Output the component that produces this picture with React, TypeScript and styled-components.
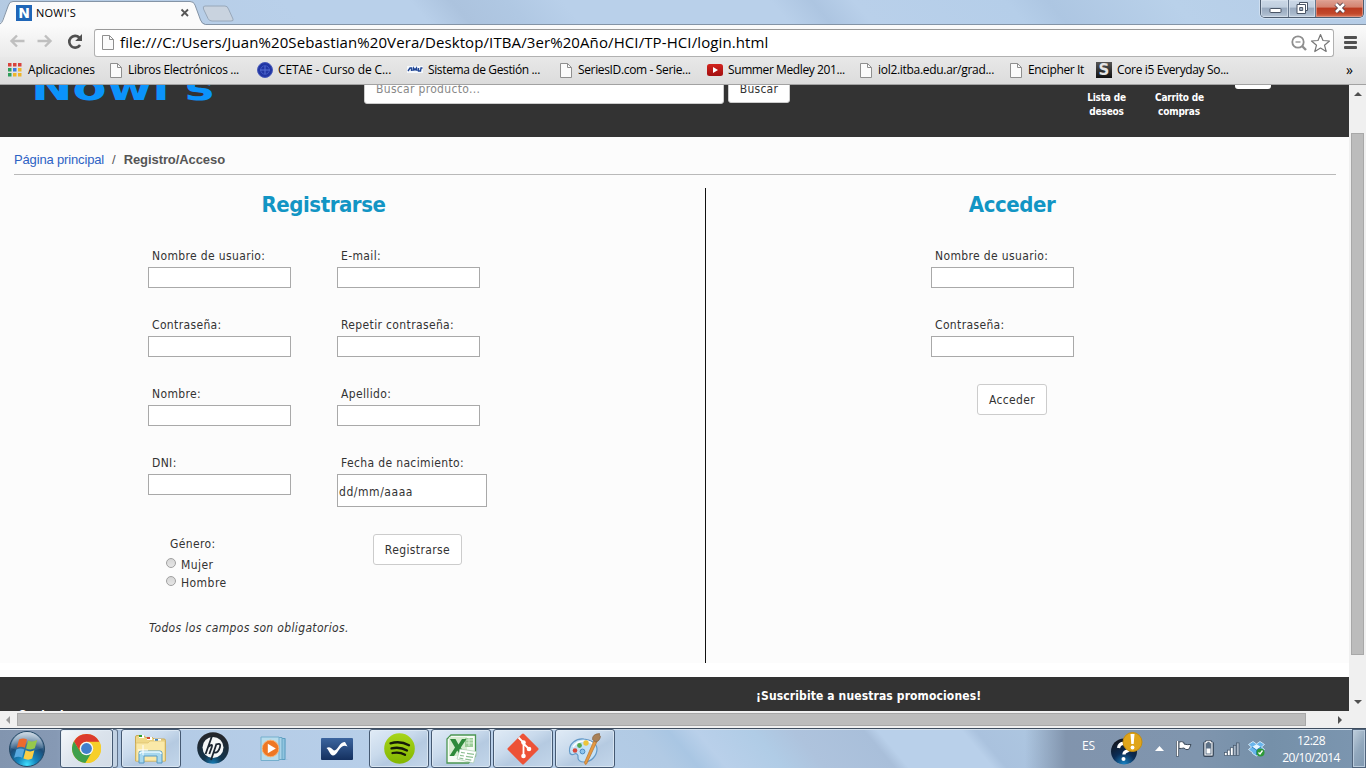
import React from 'react';
import styled, { createGlobalStyle } from 'styled-components';

const ui = `"Open Sans", "Noto Sans", sans-serif`;
const tahoma = `"DejaVu Sans Condensed", "DejaVu Sans", sans-serif`;

const GlobalStyle = createGlobalStyle`
  * { box-sizing: border-box; }
  body { margin: 0; overflow: hidden; background: #fff; }
  svg { display: block; flex: none; }
`;

const Screen = styled.div`
  width: 1366px;
  height: 768px;
  display: flex;
  flex-direction: column;
  overflow: hidden;
  font-family: ${ui};
  color: #000;
`;

const Text = styled.span<{ $ls?: number }>`
  white-space: pre;
  letter-spacing: ${(p) => p.$ls ?? 0}px;
`;

/* ---------- browser frame ---------- */

const TabStrip = styled.div`
  height: 25px;
  flex: none;
  display: flex;
  justify-content: space-between;
  background: linear-gradient(50deg, #b4cae2 0%, #b9d0ea 22%, #b9d0ea 31%, #acc3de 34%, #b0c8e3 38%, #b9d0ea 42%, #b9d0ea 57%, #adc5e1 60%, #b9d0ea 63%, #b5cee9 74%, #adc6e2 77%, #b9d1ea 86%, #b5cce6 100%);
  box-shadow: inset 0 -1px #8494a6;
`;

const TabArea = styled.div`
  width: 240px;
  height: 25px;
  position: relative;
`;

const TabShapes = styled.svg`
  position: absolute;
  inset: 0;
`;

const TabContent = styled.div`
  position: relative;
  display: flex;
  align-items: center;
  height: 25px;
  padding: 1px 0 0 16px;
  font-size: 11px;
`;

const TabTitle = styled(Text)`
  margin: -2px 0 0 4px;
  width: 144px;
`;

const WindowButtons = styled.div`
  display: flex;
  width: 104px;
  height: 18px;
  margin-right: 2px;
  border: 1px solid #4e5d70;
  border-top: 0;
  border-radius: 0 0 5px 5px;
  overflow: hidden;
  box-shadow: 0 0 0 1px #dbe7f4aa;
`;

const WindowButton = styled.div<{ $w: number; $close?: boolean }>`
  width: ${(p) => p.$w}px;
  display: flex;
  justify-content: center;
  border-right: ${(p) => (p.$close ? '0' : '1px solid #66778d')};
  box-shadow: inset 0 0 0 1px ${(p) => (p.$close ? '#e6a293aa' : '#dce6f0aa')};
  background: ${(p) =>
    p.$close
      ? 'linear-gradient(#dca194 0%, #d58472 40%, #bb3b22 50%, #c2482b 80%, #d9765a 100%)'
      : 'linear-gradient(#cbd8e7 0%, #c1cfdf 40%, #9aabc0 50%, #a7b7ca 80%, #bccada 100%)'};
`;

const Toolbar = styled.div`
  height: 32px;
  flex: none;
  display: flex;
  align-items: center;
  padding: 1px 9px 0 9px;
  background: linear-gradient(#fbfbfb, #eaeaea);
`;

const NavIcons = styled.div`
  display: flex;
  gap: 12px;
  width: 85px;
  padding-top: 1px;
`;

const Omnibox = styled.div`
  width: 1240px;
  height: 28px;
  margin-top: 2px;
  display: flex;
  align-items: center;
  padding: 0 2px 0 7px;
  background: #fff;
  border: 1px solid #b1b1b1;
  border-top-color: #999;
  border-radius: 3px;
`;

const Address = styled(Text)`
  flex: 1;
  margin: -2px 0 0 6px;
  font-size: 15px;
  line-height: 20px;
`;

const Menu = styled.div`
  width: 13px;
  margin: 2px 0 0 10px;
  display: flex;
  flex-direction: column;
  gap: 2px;
`;

const MenuBar = styled.i`
  height: 3px;
  border-radius: 1px;
  background: #505050;
`;

const Bookmarks = styled.div`
  height: 28px;
  flex: none;
  display: flex;
  align-items: center;
  padding: 0 13px 1px 8px;
  background: linear-gradient(#e8e8e8, #dcdcdc);
  border-bottom: 1px solid #a2a2a2;
  font-size: 12px;
  line-height: 16px;
`;

const Bookmark = styled.div<{ $w: number }>`
  width: ${(p) => p.$w}px;
  flex: none;
  display: flex;
  align-items: center;
`;

const BookmarkIcon = styled.div<{ $w: number }>`
  width: ${(p) => p.$w}px;
  flex: none;
`;

const Overflow = styled(Text)`
  margin-left: auto;
  font-size: 14px;
  line-height: 14px;
`;

/* ---------- page ---------- */

const Viewport = styled.div`
  height: 626px;
  flex: none;
  display: flex;
`;

const Page = styled.div`
  width: 1349px;
  height: 626px;
  display: flex;
  flex-direction: column;
  overflow: hidden;
  background: #fff;
  font-family: ${tahoma};
  font-size: 12px;
  color: #333;
`;

const Header = styled.header`
  height: 52px;
  flex: none;
  display: flex;
  align-items: flex-start;
  overflow: hidden;
  background: #333;
`;

const Brand = styled.div`
  width: 364px;
  height: 52px;
  padding-left: 31px;
  color: #0b93fb;
  font: bold 36px/30px "DejaVu Sans", sans-serif;
`;

const BrandName = styled.div`
  width: 134px;
  margin-top: -12px;
  transform: scaleX(1.38);
  transform-origin: 0 0;
`;

const SearchBox = styled.div`
  width: 360px;
  height: 34px;
  margin: -15px 4px 0 0;
  padding: 0 11px;
  background: #fff;
  border: 1px solid #ccc;
  border-radius: 3px;
  color: #888;
  line-height: 36px;
`;

const Button = styled.button<{ $w: number; $h: number }>`
  width: ${(p) => p.$w}px;
  height: ${(p) => p.$h}px;
  flex: none;
  padding: 1px 0 0;
  background: #fff;
  border: 1px solid #ccc;
  border-radius: 3px;
  color: #333;
  font: 12px/15px ${tahoma};
`;

const SearchButton = styled(Button)`
  margin-top: -12px;
  line-height: 28px;
`;

const HeaderLinks = styled.div`
  display: flex;
  gap: 28px;
  margin-left: 296px;
  color: #fff;
  font-weight: bold;
  font-size: 10px;
  line-height: 14px;
  text-align: center;
`;

const HeaderLink = styled.div<{ $w: number }>`
  width: ${(p) => p.$w}px;
  padding-top: 6px;
  white-space: pre;
  letter-spacing: -0.2px;
`;

const HeaderChip = styled.div`
  width: 36px;
  height: 14px;
  margin: -10px 0 0 32px;
  background: #fff;
  border-radius: 3px;
`;

const Main = styled.main`
  height: 526px;
  flex: none;
  background: #fcfcfc;
`;

const Breadcrumb = styled.nav`
  height: 38px;
  margin: 0 13px 0 14px;
  padding-top: 14px;
  display: flex;
  border-bottom: 1px solid #b9b9b9;
  font: 13px/17px "Liberation Sans", Arial, sans-serif;
  color: #555;
`;

const Crumb = styled(Text)`
  width: 98px;
  color: #2d62c4;
`;

const CurrentCrumb = styled(Text)`
  margin-left: 8px;
  font-weight: bold;
`;

const Panels = styled.div`
  height: 475px;
  margin-top: 13px;
  display: flex;
`;

const RegisterPanel = styled.section`
  width: 706px;
  padding-left: 148px;
  border-right: 1px solid #111;
`;

const LoginPanel = styled.section`
  padding-left: 225px;
`;

const Title = styled.h2<{ $w: number }>`
  width: ${(p) => p.$w}px;
  height: 59px;
  margin: 0;
  padding-top: 4px;
  color: #1295c4;
  font: bold 22px/26px ${tahoma};
  letter-spacing: -0.45px;
  text-align: center;
`;

const Columns = styled.div`
  display: flex;
  height: 368px;
`;

const Column = styled.div`
  width: 189px;
`;

const Field = styled.label`
  height: 69px;
  display: flex;
  flex-direction: column;
`;

const FieldLabel = styled(Text)`
  height: 20px;
  padding: 0 0 0 4px;
  line-height: 19px;
`;

const Input = styled.div<{ $date?: boolean }>`
  width: ${(p) => (p.$date ? 150 : 143)}px;
  height: ${(p) => (p.$date ? 33 : 21)}px;
  flex: none;
  padding-left: 1px;
  border: 1px solid #a9a9a9;
  background: #fff;
  line-height: 34px;
`;

const Gender = styled.div`
  padding: 12px 0 0 18px;
  line-height: 18px;
`;

const GenderTitle = styled.div`
  padding-left: 4px;
  height: 21px;
`;

const Option = styled.div`
  height: 18px;
  display: flex;
  align-items: center;
  gap: 5px;
`;

const Radio = styled.i`
  width: 10px;
  height: 10px;
  margin-top: -4px;
  border: 1px solid #a0a0a0;
  border-radius: 50%;
  background: linear-gradient(#d6d6d6, #e6e6e6);
`;

const Notice = styled.p`
  margin: 4px 0 0 1px;
  line-height: 18px;
  font-style: italic;
`;

const RegisterAction = styled.div`
  padding: 11px 0 0 36px;
`;

const LoginAction = styled.div`
  margin-top: -1px;
  padding-left: 46px;
`;

const Footer = styled.footer`
  height: 34px;
  margin-top: 14px;
  flex: none;
  display: flex;
  overflow: hidden;
  background: #333;
  color: #fff;
  font-weight: bold;
  line-height: 16px;
`;

const Contact = styled(Text)`
  width: 756px;
  padding: 30px 0 0 18px;
`;

const Subscribe = styled(Text)`
  padding-top: 11px;
`;

/* ---------- scrollbars ---------- */

const VScroll = styled.div`
  width: 17px;
  background: #f0f0f0;
  display: flex;
  flex-direction: column;
  align-items: center;
  padding-top: 7px;
`;

const VThumb = styled.div`
  width: 13px;
  height: 522px;
  margin: 37px 0 45px;
  background: #bcbcbc;
  border: 1px solid #a8a8a8;
`;

const HScroll = styled.div`
  height: 17px;
  flex: none;
  display: flex;
  align-items: center;
  padding-left: 6px;
  background: #f0f0f0;
`;

const HThumb = styled.div`
  width: 1289px;
  height: 13px;
  margin: 0 32px 0 7px;
  background: #bcbcbc;
  border: 1px solid #a8a8a8;
`;

/* ---------- taskbar ---------- */

const Taskbar = styled.div`
  height: 40px;
  flex: none;
  display: flex;
  align-items: center;
  border-top: 1px solid #3e4d5f;
  box-shadow: inset 0 1px #d5e2ef;
  background:
    linear-gradient(90deg, #8295af 0, #8699b4 56px, #8699b400 125px),
    linear-gradient(90deg, #8295af00 1025px, #8194ad 1066px, #7f95ae 1200px, #7590a9 1270px, #7c96b0 1366px),
    linear-gradient(50deg, #b0c8e3 0%, #b9d0ea 35%, #b1cae4 48%, #a9c6e3 50%, #b9d0ea 52%, #b0cce6 56%, #aec3dd 59%, #a9bfda 64%, #b9d0ea 65%, #b9d0ea 71%, #aac2de 72%, #b0cae3 80%);
`;

const Start = styled.div`
  width: 60px;
  padding-left: 8px;
`;

const Task = styled.div<{ $w: number; $gap?: number; $open?: boolean; $active?: boolean }>`
  width: ${(p) => p.$w}px;
  height: 39px;
  flex: none;
  margin-right: ${(p) => p.$gap ?? 0}px;
  display: flex;
  align-items: center;
  justify-content: center;
  border: 1px solid ${(p) => (p.$open ? '#455972' : 'transparent')};
  border-radius: 3px;
  ${(p) =>
    p.$open &&
    `box-shadow: inset 0 0 0 1px #e3edf7b0;
     background: ${
       p.$active
         ? 'linear-gradient(135deg, #f5f8fb 0%, #dbe3ec 50%, #d3dce7 100%)'
         : 'linear-gradient(150deg, #e0ebf6 0%, #c9daec 40%, #b5cae1 60%, #c3d6ea 100%)'
     };`}
`;

const StackEdge = styled.div`
  width: 5px;
  height: 39px;
  margin-right: 3px;
  border: 1px solid #60738b;
  border-left: 0;
  border-radius: 0 3px 3px 0;
  background: #c2d2e3;
`;

const Tray = styled.div`
  margin-left: auto;
  display: flex;
  align-items: center;
  height: 39px;
  color: #fff;
  font-size: 12px;
`;

const TrayItem = styled.div<{ $w: number }>`
  width: ${(p) => p.$w}px;
  flex: none;
`;

const Language = styled(Text)`
  width: 27px;
  margin-top: -6px;
`;

const Clock = styled.div`
  width: 64px;
  margin-right: 9px;
  text-align: center;
  line-height: 17px;
`;

const ShowDesktop = styled.div`
  width: 14px;
  height: 39px;
  border: 1px solid #50647c;
  box-shadow: inset 0 0 0 1px #b9cbdc;
  background: linear-gradient(120deg, #c0cfdc, #92a8bd 50%, #7f98b0);
`;

/* ---------- drawings ---------- */

const PageIcon = () => (
  <svg width="12" height="15" viewBox="0 0 12 15">
    <path d="M.5.5h7l4 4v10H.5z" fill="#fbfbfb" stroke="#8f8f8f" />
    <path d="M7.5.5v4h4" fill="none" stroke="#8f8f8f" />
  </svg>
);

const Arrow = ({ flip }: { flip?: boolean }) => (
  <svg width="16" height="14" viewBox="0 0 16 14">
    <path d="M8 1.5L2.500 7l5.500 5.500M3 7h12.500" transform={flip ? 'matrix(-1 0 0 1 16 0)' : undefined} fill="none" stroke="#bfbfbf" strokeWidth="2.400" />
  </svg>
);

const Reload = () => (
  <svg width="18" height="16" viewBox="0 0 18 16">
    <path d="M12.800 3.500A5.900 5.900 0 1 0 13.600 11" transform="translate(1.500 0)" fill="none" stroke="#505050" strokeWidth="2.600" />
    <path d="M17 0v7h-6.800z" fill="#505050" />
  </svg>
);

const Apps = () => (
  <svg width="14" height="14" viewBox="0 0 14 14">
    {['#d8433c', '#d8433c', '#d8433c', '#2f9e5a', '#3a78e0', '#eeb52a', '#2f9e5a', '#eeb52a', '#eeb52a'].map((c, i) => (
      <rect key={i} x={(i % 3) * 5} y={Math.floor(i / 3) * 5} width="3.500" height="3.500" fill={c} />
    ))}
  </svg>
);

const Cetae = () => (
  <svg width="16" height="16" viewBox="0 0 16 16">
    <circle cx="8" cy="8" r="7.500" fill="#2236a4" stroke="#4a5cba" />
    <circle cx="8" cy="8" r="4.300" fill="none" stroke="#4059c4" />
    <path d="M3 8h10M8 4v8" stroke="#5870d4" />
  </svg>
);

const Amu = () => (
  <svg width="16" height="8" viewBox="0 0 16 8">
    <rect width="16" height="7" fill="#f5f8fc" />
    <path d="M1 5l2-3h1.500v3M6 5l.500-3 1.500 2L9.500 2l.500 3M11.500 2v3h2l.500-3h1.500" fill="none" stroke="#1f4594" strokeWidth="1.400" />
  </svg>
);

const YouTube = () => (
  <svg width="16" height="12" viewBox="0 0 16 12">
    <defs><linearGradient id="yt" x2="0" y2="1"><stop stopColor="#d2231d" /><stop offset="1" stopColor="#a30f10" /></linearGradient></defs>
    <rect width="16" height="12" rx="2.500" fill="url(#yt)" />
    <path d="M6 3l5 3-5 3z" fill="#fff" />
  </svg>
);

const LetterBadge = styled.div<{ $dark?: boolean }>`
  width: 16px;
  height: 16px;
  flex: none;
  overflow: hidden;
  text-align: center;
  color: ${(p) => (p.$dark ? '#e4e4e4' : '#fff')};
  background: ${(p) => (p.$dark ? 'linear-gradient(#555, #111)' : '#1f66b8')};
  font: bold ${(p) => (p.$dark ? '15px/16px' : '14px/16px')} "DejaVu Sans", sans-serif;
`;

const Triangle = ({ d, w, h, c = '#505050' }: { d: string; w: number; h: number; c?: string }) => (
  <svg width={w} height={h} viewBox={`0 0 ${w} ${h}`}><path d={d} fill={c} /></svg>
);

const StartOrb = () => (
  <svg width="38" height="38" viewBox="0 0 38 38">
    <defs>
      <radialGradient id="orb" cx=".5" cy=".95" r=".9">
        <stop stopColor="#3fe0ff" /><stop offset=".3" stopColor="#1585bd" /><stop offset=".65" stopColor="#1d4d78" /><stop offset="1" stopColor="#7f9db9" />
      </radialGradient>
      <linearGradient id="gloss" x2="0" y2="1"><stop stopColor="#fff" stopOpacity=".6" /><stop offset="1" stopColor="#fff" stopOpacity=".05" /></linearGradient>
    </defs>
    <circle cx="19" cy="19" r="17.500" fill="url(#orb)" stroke="#254966" />
    <path d="M3 18a16 16 0 0 1 32 0c-8 3-22 4-32 0z" fill="url(#gloss)" />
    <path d="M11 9.500c3-1.700 6-1.200 8 0l-2.200 8.300c-2.200-1.300-5-1.500-8 0z" fill="#ee6a2d" />
    <path d="M20.200 10.500c3 1.500 6 1 9-.500l-2.400 8.300c-2.800 1.500-5.600 1.500-8.800.200z" fill="#96c84c" />
    <path d="M8.300 19.500c3-1.500 5.800-1.200 8 0l-2.200 8.300c-2.200-1.300-5-1.500-8 0z" fill="#58a9e0" />
    <path d="M17.600 20.300c3 1.500 6 1.500 8.800 0l-2.200 8.300c-2.800 1.500-5.600 1.300-8.800 0z" fill="#fbce45" />
  </svg>
);

const Chrome = () => (
  <svg width="29" height="29" viewBox="0 0 28 28">
    <circle cx="14" cy="14" r="14" fill="#f3c71f" />
    <path d="M1.880 7A14 14 0 0 0 13 28l6-10.500L14 20l-6-3z" fill="#3ea04c" />
    <path d="M14 7.500h12.400A14 14 0 0 1 13 28l6.500-10.500z" fill="#f6cf2b" />
    <path d="M2 7l6 10.300a6.700 6.700 0 0 1 6-9.800h12.400A14 14 0 0 0 2 7z" fill="#dc3b2e" />
    <circle cx="14" cy="14" r="6.500" fill="#f6f6f6" />
    <circle cx="14" cy="14" r="5.200" fill="#4180cc" />
  </svg>
);

const Explorer = () => (
  <svg width="34" height="30" viewBox="0 0 34 30">
    <path d="M1.500 27V3q0-1.500 1.500-1.500h7l1.500 2h7l1.500 1.500h10q1.500 0 1.500 1.500V27z" fill="#efd888" stroke="#caa956" />
    <path d="M5 1h5v3H5zM13 3h5v3h-5zM20 5h7v3h-7z" fill="#fff" />
    <path d="M5 1h3v2H5z" fill="#30a030" /><path d="M13 3h3v2h-3z" fill="#d34a30" /><path d="M21 5h3v2h-3z" fill="#3d88cd" />
    <path d="M2 9h12l2-2h15v20H2z" fill="#fae9a8" stroke="#dcc26d" strokeWidth=".700" />
    <path d="M5 29V19q0-2 2-2h19q2 0 2 2v10h-5v-7H10v7z" fill="#a8d8ee" stroke="#549ac4" />
    <path d="M6 20q0-2 2-2h17q2 0 2 2" fill="none" stroke="#e8faff" strokeWidth="1.500" />
    <path d="M9 11v10M4 16h10" stroke="#fff" />
  </svg>
);

const Hp = () => (
  <svg width="32" height="33" viewBox="0 0 32 33">
    <defs><radialGradient id="hp" cx=".5" cy="1" r=".9"><stop stopColor="#167eb8" /><stop offset=".35" stopColor="#12344c" /><stop offset="1" stopColor="#23262c" /></radialGradient></defs>
    <circle cx="16" cy="16" r="15.800" fill="url(#hp)" />
    <circle cx="16" cy="15.500" r="10.500" fill="#f5f7f8" />
    <path d="M15 4L8.600 22M11 15q5-4 3.800 0L12.300 22M19.600 11.500L14 28M19 12.500q5.300-2 4 2.500-1.800 6.500-6 5.500" fill="none" stroke="#1b2530" strokeWidth="1.800" />
  </svg>
);

const MediaPlayer = () => (
  <svg width="30" height="26" viewBox="0 0 30 26">
    <path d="M9 2h17l-1 22 4-1H8z" fill="#79b4d3" opacity=".45" />
    <path d="M5 2.500h20v21H5z" fill="#8fc4df" stroke="#5b9dc0" />
    <path d="M3 1.500h19v22H3z" fill="#a9d3e8" stroke="#68a6c6" />
    <path d="M1 1h18v23.500H1z" fill="#b8dcec" stroke="#75afcd" />
    <circle cx="10.500" cy="12.500" r="8.300" fill="#ee7724" stroke="#f8b070" />
    <path d="M7.800 7.800l8 4.700-8 4.700z" fill="#fff" />
  </svg>
);

const Swoosh = () => (
  <svg width="32" height="22" viewBox="0 0 32 22">
    <defs><linearGradient id="sw" x2="0" y2="1"><stop stopColor="#3c659f" /><stop offset="1" stopColor="#14305f" /></linearGradient></defs>
    <rect width="32" height="22" rx="1" fill="url(#sw)" />
    <path d="M5.500 10q2.500-1.500 4.500 0l3 2.500q2 0 5-4.500 2.500-4 6-4l2.500 4.500q-5-2.500-9 4-3 5-5.500 5-2 0-4-4-1-2.500-2.500-3.500z" fill="#fff" />
  </svg>
);

const Spotify = () => (
  <svg width="31" height="31" viewBox="0 0 31 31">
    <defs><linearGradient id="sp" x2="0" y2="1"><stop stopColor="#a7d51b" /><stop offset="1" stopColor="#83b600" /></linearGradient></defs>
    <circle cx="15.500" cy="15.500" r="15.300" fill="url(#sp)" />
    <path d="M6.500 10.300q10-2.800 18.500 2M7.500 15.400q8.500-2 15.500 2.100M8.500 20q7-1.500 12.500 1.800" fill="none" stroke="#161a08" strokeWidth="2.300" strokeLinecap="round" />
  </svg>
);

const Excel = () => (
  <svg width="31" height="30" viewBox="0 0 31 30">
    <path d="M5 1h24.500v21l-7 7H1V5z" fill="#f6fbf5" stroke="#4b9651" strokeWidth="1.300" />
    <path d="M3 3h18v19H3z" fill="#d7ecd0" />
    <path d="M19 4h8v9h-8z" fill="#9ccd98" /><path d="M20 6h7M20 9h7M23 4v8" stroke="#d8eed6" />
    <path d="M4 5h5.500l3 5.500L16 5h4.500l-5.700 8.500L20 22h-5.700l-3-5.500L8 22H3.500l5.500-8.500z" fill="#2e8a3a" />
    <path d="M14 15l16.500 2.500-3 11.500L11 25z" fill="#fff" stroke="#a8cdae" strokeWidth=".700" />
    <path d="M15 18.300l4 .700m2 .400l7 1M14 21.300l4 .700m2 .400l7 1M13.300 24l4 .800m2 .300l6 1" stroke="#8fc095" strokeWidth="1.200" />
  </svg>
);

const Git = () => (
  <svg width="34" height="34" viewBox="0 0 34 34">
    <rect x="5.600" y="5.600" width="22.800" height="22.800" rx="1.500" transform="rotate(45 17 17)" fill="#ed5237" />
    <path d="M12.500 5.500l5 5v14M17.500 11.500l5.500 5.500" stroke="#fff" strokeWidth="1.800" fill="none" />
    <g fill="#fff"><circle cx="17.500" cy="10.500" r="2.300" /><circle cx="23" cy="17" r="2.300" /><circle cx="17.500" cy="24" r="2.300" /></g>
  </svg>
);

const Paint = () => (
  <svg width="34" height="32" viewBox="0 0 34 32">
    <path d="M16 6C8 5 1 11 1.500 18c0 4 3 4 5 3s4 1 3.500 3c-.500 3 2 5 6 5 8 0 13-7 13-13S22 6.500 16 6z" fill="#c6e2f6" stroke="#6399c7" strokeWidth="1.200" />
    <path d="M5 14q4-6 11-6 8 0 10 5" stroke="#fff" strokeWidth="1.500" fill="none" />
    <circle cx="7" cy="17.500" r="2.300" fill="#d74a3b" /><circle cx="11.500" cy="12.500" r="2.400" fill="#53a853" />
    <circle cx="18" cy="10" r="2.700" fill="#edc53a" /><circle cx="14.500" cy="18.500" r="2.400" fill="#8cc4ee" stroke="#4c8cc2" />
    <path d="M16.500 29.500l9.500-22 3 1L18.500 31q-1.500 1.500-2-1.500z" fill="#e69a42" stroke="#b8722d" strokeWidth=".700" />
    <path d="M24.500 6.500Q24 1 31.500.500q-.500 2 1 3-1 5-5 5.500z" fill="#a98158" stroke="#7d5a38" strokeWidth=".600" />
  </svg>
);

const HelpAlert = () => (
  <svg width="34" height="34" viewBox="0 0 34 34">
    <defs><radialGradient id="ha" cx=".5" cy="1" r=".9"><stop stopColor="#1886c8" /><stop offset=".5" stopColor="#0b2c55" /><stop offset="1" stopColor="#111723" /></radialGradient></defs>
    <circle cx="15" cy="19.500" r="13" fill="url(#ha)" />
    <path d="M9.500 16q1-5 6-4.500 5.500.500 5 4.500-.500 2.500-3.500 3.500-2 .800-2 3" fill="none" stroke="#fff" strokeWidth="3.300" />
    <circle cx="14.500" cy="27" r="2" fill="#fff" />
    <circle cx="23.500" cy="10" r="9.500" fill="#e0a51b" stroke="#c48d10" />
    <path d="M21.500 2h4l-.800 10h-2.400z" fill="#fff" /><circle cx="23.500" cy="15.500" r="1.900" fill="#fff" />
  </svg>
);

const Flag = () => (
  <svg width="16" height="17" viewBox="0 0 16 17">
    <path d="M1.500 1v15.500" stroke="#3c4a5a" strokeWidth="3" /><path d="M3 2q3-1 5 .500v1.500q3 1 7 .500-1 3-2.500 5-3 .800-4.500-1.500-2 .500-5 .500z" fill="#fff" stroke="#3c4a5a" /><path d="M1.500 1v15" stroke="#fff" strokeWidth="1.500" />
  </svg>
);

const Battery = () => (
  <svg width="11" height="17" viewBox="0 0 11 17">
    <path d="M3.500 1h4v1.500H9q1 0 1 1V15q0 1-1 1H2q-1 0-1-1V3.500q0-1 1-1h1.500z" fill="#5d7187" stroke="#38475a" strokeWidth="1.800" />
    <path d="M3.800 1.200h3.400v1.600H9V15H2V2.800h1.800z" fill="none" stroke="#fff" strokeWidth="1.100" />
    <path d="M3.500 8.500h4v5h-4z" fill="#fff" />
  </svg>
);

const Signal = () => (
  <svg width="16" height="14" viewBox="0 0 16 14">
    {[0, 1, 2, 3, 4].map((i) => (
      <rect key={i} x={0.5 + i * 3} y={10.5 - i * 2.4} width="2.600" height={3 + i * 2.4} fill={i > 2 ? '#a9b7c6' : '#fff'} stroke="#44566a" strokeWidth=".700" />
    ))}
  </svg>
);

const Dropbox = () => (
  <svg width="17" height="16" viewBox="0 0 17 16">
    <path d="M5 .500l3.500 2.500L12 .500l4.500 3-3 2.500 3 2.500-4 3v1l-4 2.500-4-2.500v-1l-4-3L3.500 6l-3-2.500z" fill="#69b5ec" stroke="#e3f3fd" strokeWidth=".800" />
    <path d="M8.500 3.300L13 6l-4.500 3L4 6z" fill="#e4f4ff" /><path d="M4 6l4.500 3v5M13 6L8.500 9" stroke="#2a80c4" fill="none" />
    <circle cx="12.500" cy="11.500" r="4" fill="#2e9a38" /><path d="M10.500 11.500l1.500 1.500 2.500-3.500" stroke="#fff" strokeWidth="1.300" fill="none" />
  </svg>
);

const bookmarks: { label: string; w: number; iw: number; icon: React.ReactNode; ls?: number }[] = [
  { label: 'Aplicaciones', w: 102, iw: 20, icon: <Apps />, ls: -0.2 },
  { label: 'Libros Electrónicos ...', w: 147, iw: 18, icon: <PageIcon />, ls: -0.3 },
  { label: 'CETAE - Curso de C...', w: 150, iw: 21, icon: <Cetae />, ls: -0.1 },
  { label: 'Sistema de Gestión ...', w: 153, iw: 21, icon: <Amu />, ls: -0.37 },
  { label: 'SeriesID.com - Serie...', w: 147, iw: 18, icon: <PageIcon />, ls: -0.35 },
  { label: 'Summer Medley 201...', w: 153, iw: 21, icon: <YouTube />, ls: -0.4 },
  { label: 'iol2.itba.edu.ar/grad...', w: 150, iw: 18, icon: <PageIcon />, ls: -0.3 },
  { label: 'Encipher It', w: 86, iw: 18, icon: <PageIcon />, ls: -0.35 },
  { label: 'Core i5 Everyday So...', w: 140, iw: 21, icon: <LetterBadge $dark>S</LetterBadge>, ls: -0.35 },
];

const FormField = ({ label, date }: { label: string; date?: boolean }) => (
  <Field>
    <FieldLabel $ls={0.36}>{label}</FieldLabel>
    <Input $date={date}>{date && <Text $ls={0.55}>dd/mm/aaaa</Text>}</Input>
  </Field>
);

export default function App() {
  return (
    <Screen>
      <GlobalStyle />
      <TabStrip>
        <TabArea>
          <TabShapes width="240" height="25" viewBox="0 0 240 25">
            <path d="M0 25V23q2-1 3-4L8.500 5Q9.500 1.500 13 1.500H190q4 0 5 3.500l5.500 15q1.500 4.500 5 4.500v.500z" fill="#fbfbfb" />
            <path d="M0 24q2-1 3-4L8.500 5Q9.500 1.500 13 1.500H190q4 0 5 3.500l5.500 15q1.500 4 5 4.500" fill="none" stroke="#8494a6" />
            <path d="M205 6h20q2.500 0 3.500 3l4.500 10q1 2-2 2h-19q-3 0-4-2.500L203.500 9q-1-3 1.500-3z" fill="#c9d3df" stroke="#98a8ba" />
          </TabShapes>
          <TabContent>
            <LetterBadge>N</LetterBadge>
            <TabTitle $ls={0.25}>NOWI'S</TabTitle>
            <svg width="10" height="10" viewBox="0 0 10 10"><path d="M1.500 1.500l6.500 6.500M8 1.500L1.500 8" stroke="#555" strokeWidth="1.800" /></svg>
          </TabContent>
        </TabArea>
        <WindowButtons>
          <WindowButton $w={28}>
            <svg width="14" height="17"><rect x="2" y="8.500" width="11" height="4" rx=".500" fill="#fff" stroke="#4a5566" /></svg>
          </WindowButton>
          <WindowButton $w={27}>
            <svg width="14" height="17"><path d="M4.500 2.500h8v8h-8z" fill="#fff" stroke="#4a5566" /><path d="M2 4.500h8.500v9H2z" fill="#fff" stroke="#4a5566" /><path d="M4.700 7.500h3v3h-3z" fill="#a6b4c5" stroke="#4a5566" /></svg>
          </WindowButton>
          <WindowButton $w={47} $close>
            <svg width="14" height="17"><path d="M3 4l8 8M11 4l-8 8" stroke="#574048" strokeWidth="4.400" /><path d="M3 4l8 8M11 4l-8 8" stroke="#fff" strokeWidth="2.500" /></svg>
          </WindowButton>
        </WindowButtons>
      </TabStrip>
      <Toolbar>
        <NavIcons><Arrow /><Arrow flip /><Reload /></NavIcons>
        <Omnibox>
          <PageIcon />
          <Address $ls={0.1}>file:///C:/Users/Juan%20Sebastian%20Vera/Desktop/ITBA/3er%20Año/HCI/TP-HCI/login.html</Address>
          <svg width="16" height="16" viewBox="0 0 16 16"><circle cx="7" cy="7" r="5.700" fill="none" stroke="#8e8e8e" strokeWidth="1.800" /><path d="M4.500 7h5" stroke="#8e8e8e" strokeWidth="1.300" /><path d="M11 11l4 4" stroke="#8e8e8e" strokeWidth="2.400" /></svg>
          <svg width="24" height="20" viewBox="0 0 24 20"><path d="M13.500 1.500l2.500 6 6.500.500-5 4.200 1.700 6.300-5.700-3.500-5.700 3.500L9.500 12.200 4.500 8l6.500-.500z" fill="none" stroke="#777" strokeWidth="1.200" strokeLinejoin="round" /></svg>
        </Omnibox>
        <Menu><MenuBar /><MenuBar /><MenuBar /></Menu>
      </Toolbar>
      <Bookmarks>
        {bookmarks.map((b) => (
          <Bookmark key={b.label} $w={b.w}>
            <BookmarkIcon $w={b.iw}>{b.icon}</BookmarkIcon>
            <Text $ls={b.ls}>{b.label}</Text>
          </Bookmark>
        ))}
        <Overflow>»</Overflow>
      </Bookmarks>

      <Viewport>
        <Page>
          <Header>
            <Brand><BrandName>Nowi's</BrandName></Brand>
            <SearchBox><Text $ls={0.32}>Buscar producto...</Text></SearchBox>
            <SearchButton $w={62} $h={30}><Text $ls={0.25}>Buscar</Text></SearchButton>
            <HeaderLinks>
              <HeaderLink $w={41}>{'Lista de\ndeseos'}</HeaderLink>
              <HeaderLink $w={48}>{'Carrito de\ncompras'}</HeaderLink>
            </HeaderLinks>
            <HeaderChip />
          </Header>
          <Main>
            <Breadcrumb>
              <Crumb $ls={-0.15}>Página principal</Crumb>
              <Text>/</Text>
              <CurrentCrumb $ls={-0.08}>Registro/Acceso</CurrentCrumb>
            </Breadcrumb>
            <Panels>
              <RegisterPanel>
                <Title $w={351}>Registrarse</Title>
                <Columns>
                  <Column>
                    <FormField label="Nombre de usuario:" />
                    <FormField label="Contraseña:" />
                    <FormField label="Nombre:" />
                    <FormField label="DNI:" />
                    <Gender>
                      <GenderTitle><Text $ls={0.36}>Género:</Text></GenderTitle>
                      <Option><Radio /><Text $ls={0.45}>Mujer</Text></Option>
                      <Option><Radio /><Text $ls={0.45}>Hombre</Text></Option>
                    </Gender>
                  </Column>
                  <Column>
                    <FormField label="E-mail:" />
                    <FormField label="Repetir contraseña:" />
                    <FormField label="Apellido:" />
                    <FormField label="Fecha de nacimiento:" date />
                    <RegisterAction><Button $w={89} $h={31}><Text $ls={0.38}>Registrarse</Text></Button></RegisterAction>
                  </Column>
                </Columns>
                <Notice><Text $ls={0.35}>Todos los campos son obligatorios.</Text></Notice>
              </RegisterPanel>
              <LoginPanel>
                <Title $w={162}>Acceder</Title>
                <FormField label="Nombre de usuario:" />
                <FormField label="Contraseña:" />
                <LoginAction><Button $w={70} $h={31}><Text $ls={0.35}>Acceder</Text></Button></LoginAction>
              </LoginPanel>
            </Panels>
          </Main>
          <Footer>
            <Contact>Contacto</Contact>
            <Subscribe $ls={0.12}>¡Suscribite a nuestras promociones!</Subscribe>
          </Footer>
        </Page>
        <VScroll>
          <Triangle w={8} h={4} d="M0 4l4-4 4 4z" />
          <VThumb />
          <Triangle w={8} h={4} d="M0 0h8L4 4z" />
        </VScroll>
      </Viewport>
      <HScroll>
        <Triangle w={4} h={8} d="M4 0v8L0 4z" c="#999" />
        <HThumb />
        <Triangle w={4} h={8} d="M0 0l4 4-4 4z" />
      </HScroll>

      <Taskbar>
        <Start><StartOrb /></Start>
        <Task $w={53} $open $active><Chrome /></Task>
        <StackEdge />
        <Task $w={60} $gap={2} $open><Explorer /></Task>
        <Task $w={60} $gap={2}><Hp /></Task>
        <Task $w={60} $gap={2}><MediaPlayer /></Task>
        <Task $w={60} $gap={2}><Swoosh /></Task>
        <Task $w={60} $gap={2} $open><Spotify /></Task>
        <Task $w={60} $gap={2} $open><Excel /></Task>
        <Task $w={60} $gap={2} $open><Git /></Task>
        <Task $w={60} $open><Paint /></Task>
        <Tray>
          <Language $ls={-0.2}>ES</Language>
          <TrayItem $w={46}><HelpAlert /></TrayItem>
          <TrayItem $w={21}><Triangle w={9} h={5} d="M0 5l4.500-5L9 5z" c="#fff" /></TrayItem>
          <TrayItem $w={27}><Flag /></TrayItem>
          <TrayItem $w={21}><Battery /></TrayItem>
          <TrayItem $w={24}><Signal /></TrayItem>
          <TrayItem $w={31}><Dropbox /></TrayItem>
          <Clock><Text $ls={-0.5}>12:28</Text><br /><Text $ls={-0.6}>20/10/2014</Text></Clock>
          <ShowDesktop />
        </Tray>
      </Taskbar>
    </Screen>
  );
}
